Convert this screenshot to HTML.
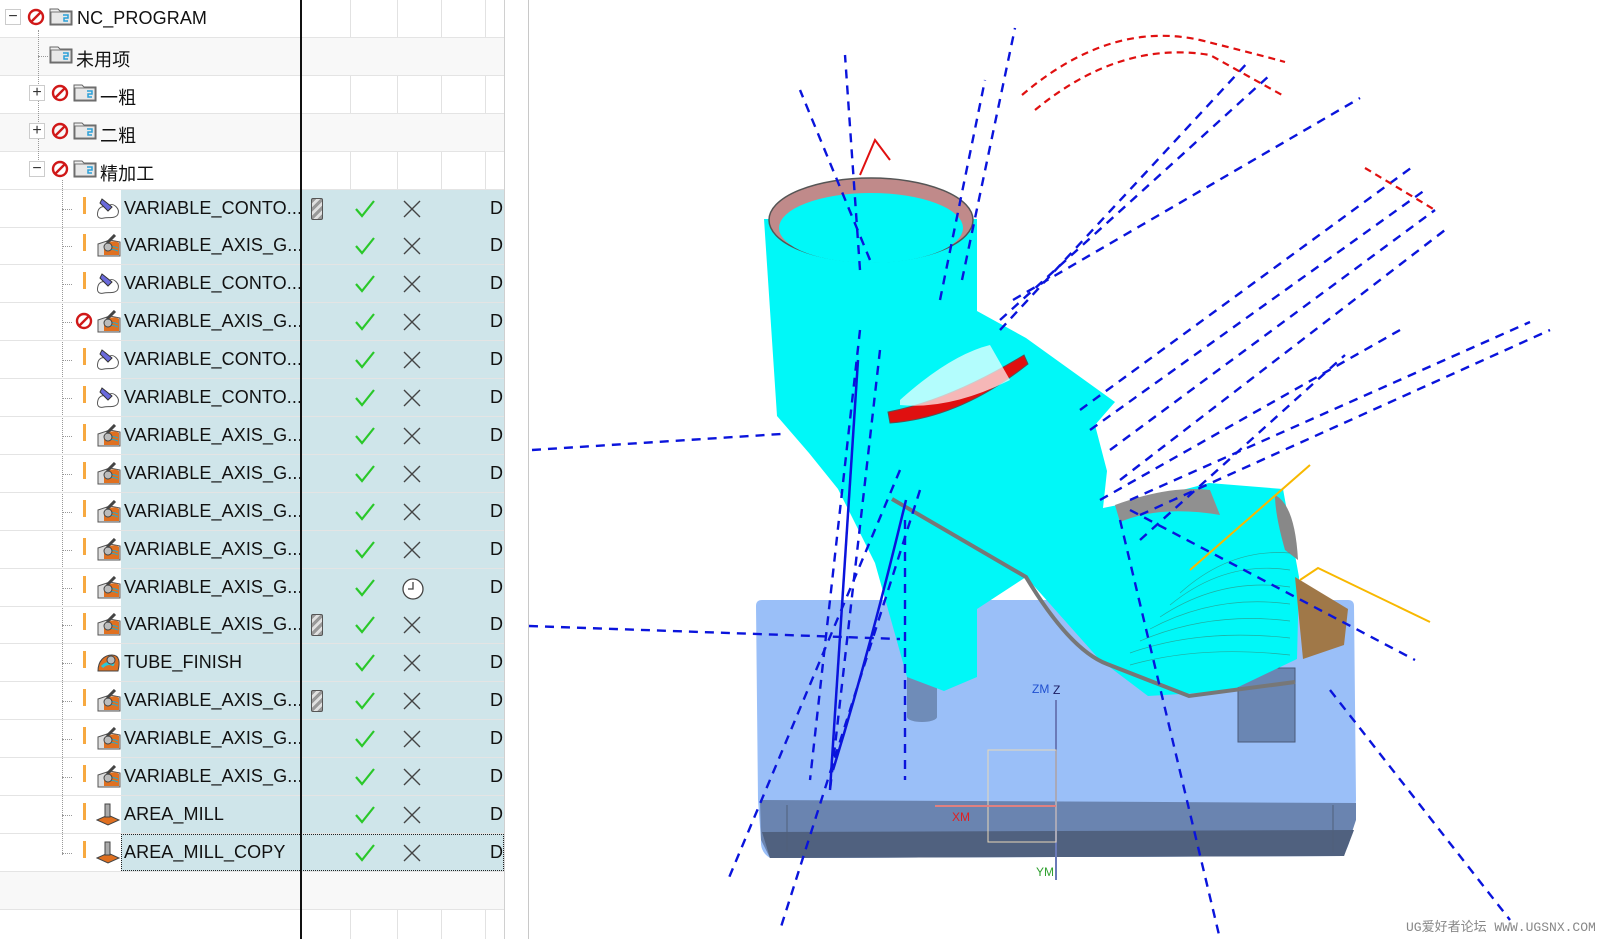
<!DOCTYPE html>
<html><head><meta charset="utf-8">
<style>
*{margin:0;padding:0;box-sizing:border-box}
body{width:1620px;height:939px;overflow:hidden;background:#fff;position:relative;font-family:"Liberation Sans","Noto Sans CJK SC",sans-serif;color:#111}
.r{position:absolute;left:0;width:504px;height:38px;border-bottom:1px solid #e4e4e4}
.g{background:#f8f8f8}
.hl{position:absolute;left:121px;top:0;width:383px;height:37px;background:#cfe5ea}
.t{position:absolute;top:8px;font-size:18px;white-space:nowrap;letter-spacing:0.1px}
.v{position:absolute;top:0;width:1px;height:939px;background:#e2e2e2}
.ex{position:absolute;left:83px;top:7px;width:3px;height:17px;background:#f7a940}
.dot{position:absolute;border-left:1px dotted #999}
.hd{position:absolute;border-top:1px dotted #999;height:0}
.D{position:absolute;left:490px;top:8px;font-size:18px}
.ck{position:absolute;left:355px;top:9px}
.xx{position:absolute;left:403px;top:10px}
.tl{position:absolute;left:311px;top:8px;width:12px;height:22px;border:1px solid #555;border-radius:2px;background:repeating-linear-gradient(135deg,#999 0 3px,#e0e0e0 3px 6px)}
.ic{position:absolute;left:96px;top:7px}
.bx{position:absolute;width:16px;height:16px;border:1px solid #ccc;background:#fff;font-size:16px;line-height:13px;text-align:center;color:#333}
</style></head><body>

<div class="v" style="left:350px"></div>
<div class="v" style="left:397px"></div>
<div class="v" style="left:441px"></div>
<div class="v" style="left:485px"></div>
<div class="v" style="left:504px;background:#d0d0d0"></div>
<div class="v" style="left:528px;background:#c8c8c8"></div>

<div class="r" style="top:0"></div>
<div class="r g" style="top:37.9px"></div>
<div class="r" style="top:75.8px"></div>
<div class="r g" style="top:113.7px"></div>
<div class="r" style="top:151.6px"></div>
<div class="r g" style="top:871.7px;height:38px"></div>

<svg width="0" height="0" style="position:absolute"><defs>
<g id="no"><circle cx="9" cy="9" r="7" fill="none" stroke="#d01818" stroke-width="2.4"/><line x1="4" y1="14" x2="14" y2="4" stroke="#d01818" stroke-width="2.4"/></g>
<g id="fd"><path d="M1 3h8l2 2h12v14H1z" fill="#eee" stroke="#666"/><rect x="2" y="6" width="20" height="12" fill="#e8e8e8" stroke="#777"/><path d="M14 9h5v3h-4v3h4" fill="none" stroke="#2a9fd8" stroke-width="1.5"/></g>
<g id="va"><path d="M2 10l12-4 10 2v14H2z" fill="#ddd" stroke="#555"/><path d="M8 12c3-5 12-6 15-3v12H8z" fill="#e07020"/><path d="M10 14q6-3 12 0M10 17q6-3 12 0" stroke="#2aa8c8" fill="none"/><circle cx="12" cy="13" r="4" fill="#bbb" stroke="#444"/><path d="M11 9L19 1" stroke="#444" stroke-width="3"/></g>
<g id="vc"><path d="M2 14c2-6 8-4 12-6s10 4 8 9-10 3-14 4-8 0-6-7z" fill="#fff" stroke="#555"/><path d="M6 2l10 8-4 4L4 6z" fill="#6a6adc" stroke="#333"/></g>
<g id="am"><path d="M1 17l11-5 11 5-11 5z" fill="#e07020" stroke="#444"/><rect x="9" y="1" width="5" height="13" fill="#aaa" stroke="#444"/></g>
<g id="tf"><path d="M2 20c0-10 6-16 14-16s8 8 6 16z" fill="#e07020" stroke="#444"/><path d="M6 16q6-6 12-2" stroke="#2ac8d8" stroke-width="3" fill="none"/><circle cx="15" cy="9" r="4" fill="#bbb" stroke="#444"/></g>
<g id="ck"><path d="M1 10l6 7L19 2" fill="none" stroke="#2ac82a" stroke-width="2.2"/></g>
<g id="xx"><path d="M1 1l16 16M17 1L1 17" stroke="#444" stroke-width="1.4"/></g>
</defs></svg>

<div class="dot" style="left:38px;top:30px;height:132px"></div>
<div class="hd" style="left:38px;top:56px;width:10px"></div>
<div class="dot" style="left:62px;top:180px;height:675px"></div>

<div class="bx" style="left:5px;top:9px">−</div>
<svg style="position:absolute;left:27px;top:8px" width="20" height="20"><use href="#no"/></svg>
<svg style="position:absolute;left:49px;top:6px" width="24" height="22"><use href="#fd"/></svg>
<div class="t" style="left:77px;top:8px">NC_PROGRAM</div>

<svg style="position:absolute;left:49px;top:44px" width="24" height="22"><use href="#fd"/></svg>
<div class="t" style="left:76px;top:46px">未用项</div>

<div class="bx" style="left:29px;top:85px">+</div>
<svg style="position:absolute;left:51px;top:84px" width="20" height="20"><use href="#no"/></svg>
<svg style="position:absolute;left:73px;top:82px" width="24" height="22"><use href="#fd"/></svg>
<div class="t" style="left:100px;top:84px">一粗</div>

<div class="bx" style="left:29px;top:123px">+</div>
<svg style="position:absolute;left:51px;top:122px" width="20" height="20"><use href="#no"/></svg>
<svg style="position:absolute;left:73px;top:120px" width="24" height="22"><use href="#fd"/></svg>
<div class="t" style="left:100px;top:122px">二粗</div>

<div class="bx" style="left:29px;top:161px">−</div>
<svg style="position:absolute;left:51px;top:160px" width="20" height="20"><use href="#no"/></svg>
<svg style="position:absolute;left:73px;top:158px" width="24" height="22"><use href="#fd"/></svg>
<div class="t" style="left:100px;top:160px">精加工</div>

<div class="r" style="top:189.5px"><div class="hl"></div><div class="hd" style="left:62px;top:19px;width:10px"></div><div class="ex"></div><svg class="ic" width="26" height="24"><use href="#vc"/></svg><div class="t" style="left:124px">VARIABLE_CONTO...</div><div class="tl"></div><svg class="ck" width="21" height="20"><use href="#ck"/></svg><svg class="xx" width="19" height="19"><use href="#xx"/></svg><div class="D">D</div></div>
<div class="r" style="top:227.4px"><div class="hl"></div><div class="hd" style="left:62px;top:19px;width:10px"></div><div class="ex"></div><svg class="ic" width="26" height="24"><use href="#va"/></svg><div class="t" style="left:124px">VARIABLE_AXIS_G...</div><svg class="ck" width="21" height="20"><use href="#ck"/></svg><svg class="xx" width="19" height="19"><use href="#xx"/></svg><div class="D">D</div></div>
<div class="r" style="top:265.3px"><div class="hl"></div><div class="hd" style="left:62px;top:19px;width:10px"></div><div class="ex"></div><svg class="ic" width="26" height="24"><use href="#vc"/></svg><div class="t" style="left:124px">VARIABLE_CONTO...</div><svg class="ck" width="21" height="20"><use href="#ck"/></svg><svg class="xx" width="19" height="19"><use href="#xx"/></svg><div class="D">D</div></div>
<div class="r" style="top:303.2px"><div class="hl"></div><div class="hd" style="left:62px;top:19px;width:10px"></div><svg style="position:absolute;left:75px;top:9px" width="20" height="20"><use href="#no"/></svg><svg class="ic" width="26" height="24"><use href="#va"/></svg><div class="t" style="left:124px">VARIABLE_AXIS_G...</div><svg class="ck" width="21" height="20"><use href="#ck"/></svg><svg class="xx" width="19" height="19"><use href="#xx"/></svg><div class="D">D</div></div>
<div class="r" style="top:341.1px"><div class="hl"></div><div class="hd" style="left:62px;top:19px;width:10px"></div><div class="ex"></div><svg class="ic" width="26" height="24"><use href="#vc"/></svg><div class="t" style="left:124px">VARIABLE_CONTO...</div><svg class="ck" width="21" height="20"><use href="#ck"/></svg><svg class="xx" width="19" height="19"><use href="#xx"/></svg><div class="D">D</div></div>
<div class="r" style="top:379px"><div class="hl"></div><div class="hd" style="left:62px;top:19px;width:10px"></div><div class="ex"></div><svg class="ic" width="26" height="24"><use href="#vc"/></svg><div class="t" style="left:124px">VARIABLE_CONTO...</div><svg class="ck" width="21" height="20"><use href="#ck"/></svg><svg class="xx" width="19" height="19"><use href="#xx"/></svg><div class="D">D</div></div>
<div class="r" style="top:416.9px"><div class="hl"></div><div class="hd" style="left:62px;top:19px;width:10px"></div><div class="ex"></div><svg class="ic" width="26" height="24"><use href="#va"/></svg><div class="t" style="left:124px">VARIABLE_AXIS_G...</div><svg class="ck" width="21" height="20"><use href="#ck"/></svg><svg class="xx" width="19" height="19"><use href="#xx"/></svg><div class="D">D</div></div>
<div class="r" style="top:454.8px"><div class="hl"></div><div class="hd" style="left:62px;top:19px;width:10px"></div><div class="ex"></div><svg class="ic" width="26" height="24"><use href="#va"/></svg><div class="t" style="left:124px">VARIABLE_AXIS_G...</div><svg class="ck" width="21" height="20"><use href="#ck"/></svg><svg class="xx" width="19" height="19"><use href="#xx"/></svg><div class="D">D</div></div>
<div class="r" style="top:492.7px"><div class="hl"></div><div class="hd" style="left:62px;top:19px;width:10px"></div><div class="ex"></div><svg class="ic" width="26" height="24"><use href="#va"/></svg><div class="t" style="left:124px">VARIABLE_AXIS_G...</div><svg class="ck" width="21" height="20"><use href="#ck"/></svg><svg class="xx" width="19" height="19"><use href="#xx"/></svg><div class="D">D</div></div>
<div class="r" style="top:530.6px"><div class="hl"></div><div class="hd" style="left:62px;top:19px;width:10px"></div><div class="ex"></div><svg class="ic" width="26" height="24"><use href="#va"/></svg><div class="t" style="left:124px">VARIABLE_AXIS_G...</div><svg class="ck" width="21" height="20"><use href="#ck"/></svg><svg class="xx" width="19" height="19"><use href="#xx"/></svg><div class="D">D</div></div>
<div class="r" style="top:568.5px"><div class="hl"></div><div class="hd" style="left:62px;top:19px;width:10px"></div><div class="ex"></div><svg class="ic" width="26" height="24"><use href="#va"/></svg><div class="t" style="left:124px">VARIABLE_AXIS_G...</div><svg class="ck" width="21" height="20"><use href="#ck"/></svg><svg style="position:absolute;left:401px;top:8px" width="24" height="24"><circle cx="12" cy="12" r="10" fill="#fff" stroke="#444" stroke-width="1.3"/><path d="M12 5v7h-5" fill="none" stroke="#444" stroke-width="1.3"/></svg><div class="D">D</div></div>
<div class="r" style="top:606.4px"><div class="hl"></div><div class="hd" style="left:62px;top:19px;width:10px"></div><div class="ex"></div><svg class="ic" width="26" height="24"><use href="#va"/></svg><div class="t" style="left:124px">VARIABLE_AXIS_G...</div><div class="tl"></div><svg class="ck" width="21" height="20"><use href="#ck"/></svg><svg class="xx" width="19" height="19"><use href="#xx"/></svg><div class="D">D</div></div>
<div class="r" style="top:644.3px"><div class="hl"></div><div class="hd" style="left:62px;top:19px;width:10px"></div><div class="ex"></div><svg class="ic" width="26" height="24"><use href="#tf"/></svg><div class="t" style="left:124px">TUBE_FINISH</div><svg class="ck" width="21" height="20"><use href="#ck"/></svg><svg class="xx" width="19" height="19"><use href="#xx"/></svg><div class="D">D</div></div>
<div class="r" style="top:682.2px"><div class="hl"></div><div class="hd" style="left:62px;top:19px;width:10px"></div><div class="ex"></div><svg class="ic" width="26" height="24"><use href="#va"/></svg><div class="t" style="left:124px">VARIABLE_AXIS_G...</div><div class="tl"></div><svg class="ck" width="21" height="20"><use href="#ck"/></svg><svg class="xx" width="19" height="19"><use href="#xx"/></svg><div class="D">D</div></div>
<div class="r" style="top:720.1px"><div class="hl"></div><div class="hd" style="left:62px;top:19px;width:10px"></div><div class="ex"></div><svg class="ic" width="26" height="24"><use href="#va"/></svg><div class="t" style="left:124px">VARIABLE_AXIS_G...</div><svg class="ck" width="21" height="20"><use href="#ck"/></svg><svg class="xx" width="19" height="19"><use href="#xx"/></svg><div class="D">D</div></div>
<div class="r" style="top:758px"><div class="hl"></div><div class="hd" style="left:62px;top:19px;width:10px"></div><div class="ex"></div><svg class="ic" width="26" height="24"><use href="#va"/></svg><div class="t" style="left:124px">VARIABLE_AXIS_G...</div><svg class="ck" width="21" height="20"><use href="#ck"/></svg><svg class="xx" width="19" height="19"><use href="#xx"/></svg><div class="D">D</div></div>
<div class="r" style="top:795.9px"><div class="hl"></div><div class="hd" style="left:62px;top:19px;width:10px"></div><div class="ex"></div><svg class="ic" width="26" height="24"><use href="#am"/></svg><div class="t" style="left:124px">AREA_MILL</div><svg class="ck" width="21" height="20"><use href="#ck"/></svg><svg class="xx" width="19" height="19"><use href="#xx"/></svg><div class="D">D</div></div>
<div class="r" style="top:833.8px"><div class="hl" style="border:1px dotted #222"></div><div class="hd" style="left:62px;top:19px;width:10px"></div><div class="ex"></div><svg class="ic" width="26" height="24"><use href="#am"/></svg><div class="t" style="left:124px">AREA_MILL_COPY</div><svg class="ck" width="21" height="20"><use href="#ck"/></svg><svg class="xx" width="19" height="19"><use href="#xx"/></svg><div class="D">D</div></div>

<div style="position:absolute;left:300px;top:0;width:2px;height:939px;background:#111"></div>

<svg style="position:absolute;left:0;top:0" width="1620" height="939" viewBox="0 0 1620 939">
<!-- base plate -->
<path d="M756 606 Q756 600 762 600 L1348 600 Q1354 600 1354 606 L1356 800 Q1352 852 1340 856 L770 858 Q760 852 761 840 L758 800 Z" fill="#9abff8"/>
<path d="M760 800 L1356 803 L1356 820 L1344 856 L770 858 L761 840 Z" fill="#6a84b0"/>
<path d="M762 832 L1354 830 L1344 856 L770 858 Z" fill="#50617f"/>
<line x1="787" y1="805" x2="787" y2="852" stroke="#50607a"/>
<line x1="1333" y1="805" x2="1333" y2="852" stroke="#50607a"/>
<!-- posts -->
<rect x="907" y="677" width="30" height="40" fill="#6f8cb8"/><ellipse cx="922" cy="717" rx="15" ry="5" fill="#6f8cb8"/>
<rect x="1238" y="668" width="57" height="74" fill="#6a86b3" stroke="#4a5a78"/>
<!-- shoe body -->
<path d="M764 219 L977 219 L977 311 L1026 338 L1115 402 L1095 425 L1107 471 L1103 508 L1148 499 L1209 483 L1283 489 L1299 577 L1297 659 L1230 691 L1148 696 L1099 659 L1026 577 L977 609 L977 677 L944 691 L907 677 L875 563 L838 489 L809 453 L777 416 Z" fill="#00f8f8"/>
<path d="M1295 577 L1348 609 L1344 645 L1303 659 Z" fill="#a07848"/>
<ellipse cx="871" cy="220" rx="102" ry="42" fill="#c08a8a" stroke="#555" stroke-width="1.5"/>
<ellipse cx="871" cy="228" rx="92" ry="35" fill="#00f8f8"/>
<path d="M888 412 Q950 400 1024 355 L1028 364 Q960 418 890 423 Z" fill="#e01010" stroke="#555"/>
<path d="M900 400 Q950 355 990 345 L1010 380 Q950 410 900 405Z" fill="#fff" opacity=".7"/>
<path d="M892 499 L1026 577 Q1070 650 1107 664 L1189 696 L1295 682" fill="none" stroke="#777" stroke-width="4"/>
<path d="M1115 505 Q1170 485 1210 490 L1220 515 Q1160 505 1120 522 Z" fill="#909090"/>
<path d="M1275 495 Q1295 505 1298 560 L1285 550 Q1275 515 1275 495Z" fill="#888"/>
<g stroke="#2a9a8a" stroke-width=".7" fill="none" opacity=".8">
<path d="M1130 665 Q1200 645 1290 655"/><path d="M1130 653 Q1200 628 1290 638"/><path d="M1140 641 Q1210 611 1290 621"/><path d="M1150 629 Q1215 594 1290 604"/><path d="M1160 617 Q1220 577 1290 587"/><path d="M1170 605 Q1225 560 1290 570"/><path d="M1180 593 Q1230 548 1290 553"/>
</g>
<g stroke="#0a14dc" stroke-width="2.4" stroke-dasharray="9 7" fill="none">
<line x1="532" y1="450" x2="781" y2="434"/>
<line x1="529" y1="626" x2="900" y2="639"/>
<line x1="1013" y1="300" x2="1360" y2="98"/>
<line x1="1000" y1="320" x2="1270" y2="75"/>
<line x1="1000" y1="330" x2="1250" y2="60"/>
<line x1="1080" y1="410" x2="1415" y2="165"/>
<line x1="1090" y1="430" x2="1425" y2="190"/>
<line x1="1110" y1="450" x2="1435" y2="210"/>
<line x1="1120" y1="480" x2="1445" y2="230"/>
<line x1="1130" y1="500" x2="1530" y2="322"/>
<line x1="1140" y1="515" x2="1550" y2="330"/>
<line x1="1100" y1="500" x2="1400" y2="330"/>
<line x1="962" y1="280" x2="1015" y2="28"/>
<line x1="940" y1="300" x2="985" y2="80"/>
<line x1="860" y1="270" x2="845" y2="55"/>
<line x1="870" y1="260" x2="800" y2="90"/>
<line x1="860" y1="330" x2="810" y2="780"/>
<line x1="880" y1="350" x2="830" y2="790"/>
<line x1="900" y1="470" x2="728" y2="880"/>
<line x1="920" y1="490" x2="780" y2="930"/>
<line x1="905" y1="520" x2="905" y2="780"/>
<line x1="1120" y1="520" x2="1220" y2="939"/>
<line x1="1130" y1="510" x2="1415" y2="660"/>
<line x1="1330" y1="690" x2="1510" y2="920"/>
<line x1="1140" y1="540" x2="1345" y2="355"/>
</g>
<path d="M858 360 L830 790" stroke="#0a14dc" stroke-width="2.5"/>
<path d="M906 500 Q870 650 833 770" stroke="#0a14dc" stroke-width="2.5" fill="none"/>
<g stroke="#e01010" stroke-width="2.2" stroke-dasharray="7 5" fill="none">
<path d="M1022 95 Q1110 20 1200 40 Q1260 55 1285 62"/>
<path d="M1035 110 Q1120 40 1210 55 L1282 95"/>
<path d="M1365 168 L1435 210"/>
</g>
<path d="M860 175 L875 140 L890 160" stroke="#e01010" stroke-width="2" fill="none"/>
<path d="M1190 570 L1310 465" stroke="#f8b800" stroke-width="2"/>
<path d="M1300 580 L1318 568 L1430 622" stroke="#f8b800" stroke-width="2" fill="none"/>
<line x1="1056" y1="700" x2="1056" y2="880" stroke="#6a7ab8" stroke-width="2"/>
<rect x="988" y="750" width="68" height="92" fill="none" stroke="#e8d8b8"/>
<line x1="935" y1="806" x2="1056" y2="806" stroke="#e08080" stroke-width="2"/>
<text x="1032" y="693" font-size="12" fill="#2050d0" font-family="Liberation Sans">ZM</text>
<text x="1053" y="694" font-size="12" fill="#1a1a60" font-family="Liberation Sans">Z</text>
<text x="952" y="821" font-size="12" fill="#e02020" font-family="Liberation Sans">XM</text>
<text x="1036" y="876" font-size="12" fill="#30a030" font-family="Liberation Sans">YM</text>
<text x="1406" y="931" font-size="13" fill="#888" font-family="Liberation Mono,Noto Sans CJK SC,monospace">UG爱好者论坛 WWW.UGSNX.COM</text>
</svg>
</body></html>
